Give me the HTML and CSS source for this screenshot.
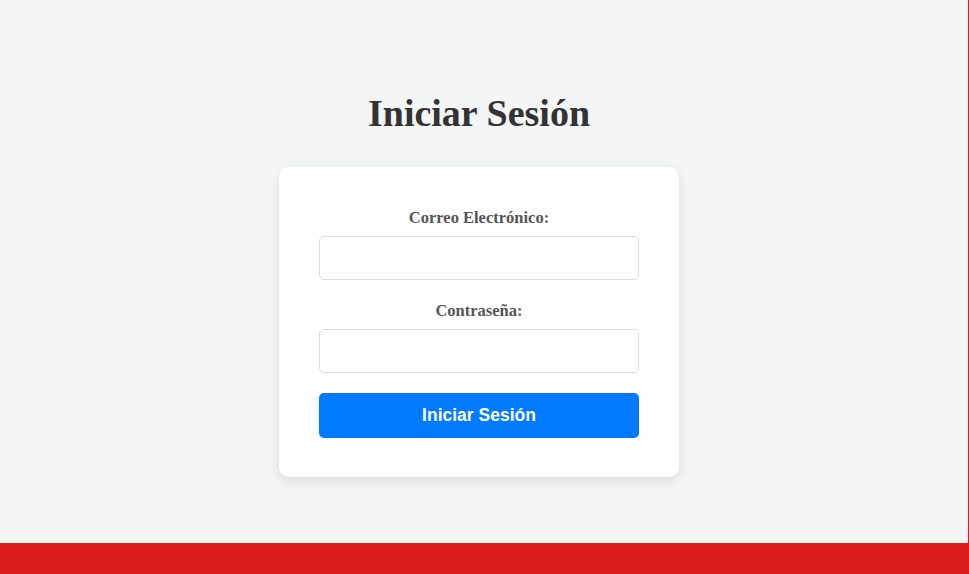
FILE: index.html
```html
<!DOCTYPE html>
<html lang="es">
<head>
<meta charset="utf-8">
<title>Iniciar Sesión</title>
<link rel="stylesheet" href="styles.css">
</head>
<body>
<div class="page">
  <main class="main">
    <h1 class="title">Iniciar Sesión</h1>
    <form class="card">
      <label class="label" for="email">Correo Electrónico:</label>
      <input class="input" id="email" type="email">
      <label class="label" for="pass">Contraseña:</label>
      <input class="input" id="pass" type="password">
      <button class="btn" type="button">Iniciar Sesión</button>
    </form>
  </main>
  <footer class="footer"></footer>
</div>
</body>
</html>
```
FILE: styles.css
```css
* { box-sizing: border-box; }
html, body { margin: 0; padding: 0; }
body {
  background: #dc1c1b;
  font-family: "Liberation Serif", "Times New Roman", serif;
}
.page {
  display: flex;
  flex-direction: column;
  height: 574px;
  overflow: hidden;
}
.main {
  height: 543px;
  margin-right: 1px;
  padding-right: 10px;
  background: #f4f5f5;
  display: flex;
  flex-direction: column;
  align-items: center;
  padding-top: 91px;
}
.title {
  margin: 0 0 32px;
  font-size: 38px;
  line-height: 44px;
  font-weight: bold;
  color: #333;
}
.card {
  width: 400px;
  background: #fff;
  border-radius: 10px;
  padding: 40px 40px 39px;
  box-shadow: 0 4px 12px rgba(0, 0, 0, 0.1);
  display: flex;
  flex-direction: column;
}
.label {
  text-align: center;
  font-size: 16.5px;
  line-height: 21px;
  font-weight: bold;
  color: #555;
  margin-bottom: 8px;
}
.input {
  height: 44px;
  width: 100%;
  border: 1px solid #ddd;
  border-radius: 5px;
  background: #fff;
  margin: 0 0 20px;
  font-size: 16px;
  padding: 10px;
}
.btn {
  height: 45px;
  border: none;
  border-radius: 5px;
  background: #007bff;
  color: #fff;
  font-family: "Liberation Sans", Arial, sans-serif;
  font-weight: bold;
  font-size: 17.5px;
  cursor: pointer;
}
.footer {
  flex: 1;
  background: #dc1c1b;
}
```
